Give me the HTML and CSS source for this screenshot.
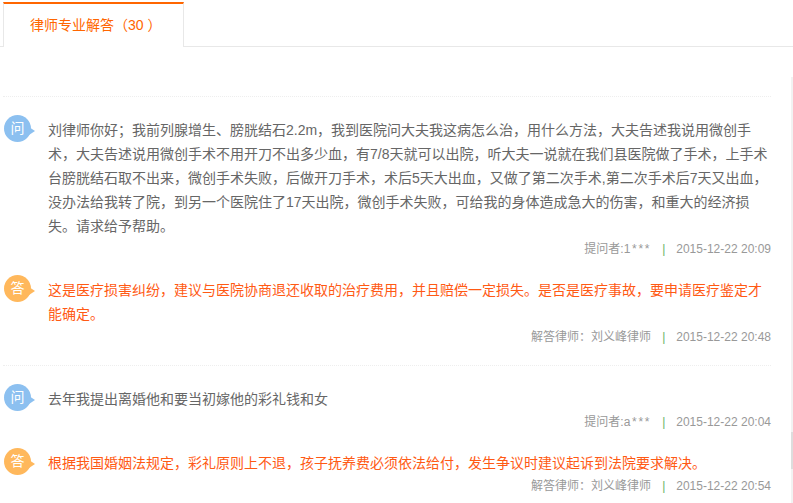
FILE: index.html
```html
<!DOCTYPE html>
<html lang="zh-CN">
<head>
  <meta charset="UTF-8">
  <title>律师专业解答</title>
  <link rel="stylesheet" href="styles.css">
</head>
<body>
<div class="tabs">
  <div class="tab on">律师专业解答（30 ）</div>
</div>
<div class="list">
  <div class="item">
    <div class="row">
      <span class="bubble ask">问</span>
      <p class="txt">刘律师你好；我前列腺增生、膀胱结石2.2m，我到医院问大夫我这病怎么治，用什么方法，大夫告述我说用微创手术，大夫告述说用微创手术不用开刀不出多少血，有7/8天就可以出院，听大夫一说就在我们县医院做了手术，上手术台膀胱结石取不出来，微创手术失败，后做开刀手术，术后5天大出血，又做了第二次手术,第二次手术后7天又出血，没办法给我转了院，到另一个医院住了17天出院，微创手术失败，可给我的身体造成急大的伤害，和重大的经济损失。请求给予帮助。</p>
    </div>
    <div class="meta"><span>提问者:<b class="nick">1***</b></span><i>|</i><span>2015-12-22 20:09</span></div>
    <div class="row">
      <span class="bubble ans">答</span>
      <p class="txt red">这是医疗损害纠纷，建议与医院协商退还收取的治疗费用，并且赔偿一定损失。是否是医疗事故，要申请医疗鉴定才能确定。</p>
    </div>
    <div class="meta"><span>解答律师：刘义峰律师</span><i>|</i><span>2015-12-22 20:48</span></div>
  </div>
  <div class="item">
    <div class="row">
      <span class="bubble ask">问</span>
      <p class="txt">去年我提出离婚他和要当初嫁他的彩礼钱和女</p>
    </div>
    <div class="meta"><span>提问者:<b class="nick">a***</b></span><i>|</i><span>2015-12-22 20:04</span></div>
    <div class="row">
      <span class="bubble ans">答</span>
      <p class="txt red">根据我国婚姻法规定，彩礼原则上不退，孩子抚养费必须依法给付，发生争议时建议起诉到法院要求解决。</p>
    </div>
    <div class="meta"><span>解答律师：刘义峰律师</span><i>|</i><span>2015-12-22 20:54</span></div>
  </div>
</div>
<div class="scroll"><div class="thumb"></div></div>
</body>
</html>
```

FILE: styles.css
```css
*{padding: 0; margin: 0; box-sizing: border-box;}
html,body{height: 100%; overflow: hidden;}
body{
  position: relative;
  background: #fff;
  font-family: "Liberation Sans", "Noto Sans CJK SC", sans-serif;
  font-size: 14px;
  color: #666;
}
.tabs{
  height: 47px;
  padding: 2px 0 0 3px;
  border-bottom: 1px solid #e8e8e8;
}
.tab{
  width: 181px;
  height: 45px;
  padding-left: 26px;
  line-height: 42px;
  color: #f60;
  background: #fff;
  border: 1px solid #e8e8e8;
  border-top: 2px solid #f60;
  border-bottom: 0;
}
.list{
  width: 771px;
  margin-top: 49px;
  padding-left: 3px;
}
.item{
  border-top: 1px dotted #eee;
  padding-top: 18px;
  height: 269px;
}
.item + .item{
  height: auto;
}
.row{
  display: flex;
  gap: 17px;
  align-items: flex-start;
}
.bubble{
  position: relative;
  flex: none;
  width: 27px;
  height: 27px;
  margin-left: 1px;
  border-radius: 50%;
  line-height: 26px;
  text-align: center;
  color: #fff;
  font-size: 14px;
}
.bubble:after{
  content: "";
  position: absolute;
  right: -4px;
  top: 12px;
  border-left: 6px solid;
  border-top: 4px solid transparent;
  border-bottom: 4px solid transparent;
}
.ask{background: #8cc0f0;}
.ask:after{color: #8cc0f0;}
.ans{background: #ffb85c;}
.ans:after{color: #ffb85c;}
.txt{
  flex: 1;
  line-height: 24px;
  padding-top: 3px;
}
.red{color: #ff5a14;}
.meta{
  display: flex;
  justify-content: flex-end;
  gap: 11px;
  height: 22px;
  line-height: 22px;
  margin: 0 0 15px;
  font-size: 12px;
  color: #999;
}
.meta i{
  font-style: normal;
  color: #66b266;
}
.nick{
  font-weight: normal;
  letter-spacing: 1.7px;
}
.scroll{
  position: absolute;
  right: 0;
  top: 77px;
  bottom: 0;
  width: 2px;
  background: #f2f2f2;
}
.thumb{
  position: absolute;
  top: 355px;
  left: 0;
  width: 100%;
  height: 37px;
  background: #ddd;
}
```
